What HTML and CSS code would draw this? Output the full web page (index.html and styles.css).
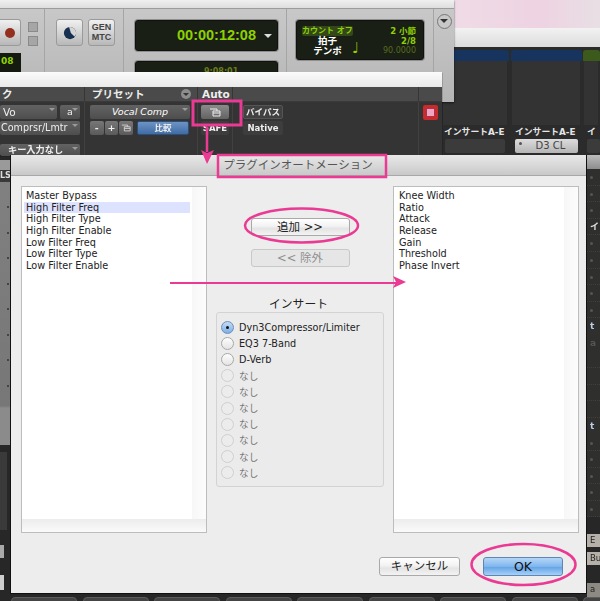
FILE: index.html
```html
<!DOCTYPE html>
<html>
<head>
  <meta charset="utf-8">
  <link rel="stylesheet" href="styles.css">
  <title>プラグインオートメーション</title>
</head>
<body>
  <div class="desktop">
    <div class="pink-strip"></div>
    <div class="white-band"></div>

    <div class="mixer">
      <div class="channel narrow">
        <div class="channel-bar"></div>
        <div class="channel-body"></div>
        <div class="channel-label">インサートA-E</div>
        <div class="slot"></div>
      </div>
      <div class="channel">
        <div class="channel-bar"></div>
        <div class="channel-body"></div>
        <div class="channel-label">インサートA-E</div>
        <div class="slot filled"><span class="slot-dot"></span>D3 CL</div>
      </div>
      <div class="channel last">
        <div class="channel-bar green"></div>
        <div class="channel-body"></div>
        <div class="channel-label">イ</div>
        <div class="slot"></div>
      </div>
    </div>

    <div class="side-right">
      <div class="side-top"></div>
      <div class="side-rows">
        <div class="row dot"></div><div class="row dot"></div><div class="row dot"></div>
        <div class="row label">イ</div>
        <div class="row dot"></div><div class="row dot"></div><div class="row dot"></div><div class="row dot"></div><div class="row dot"></div>
        <div class="row blue">t</div>
        <div class="row faint">a</div>
        <div class="row"></div><div class="row"></div><div class="row"></div><div class="row"></div>
        <div class="row blue">t</div>
        <div class="row dot"></div><div class="row dot"></div><div class="row dot"></div><div class="row dot"></div><div class="row dot"></div>
      </div>
      <div class="side-btn">E</div>
      <div class="side-btn">Bu</div>
      <div class="side-btn low">a</div>
    </div>
    <div class="side-left">
      <div class="side-head"></div>
      <div class="side-ls">LS</div>
      <div class="side-gray">
        <i></i><i></i><i></i><i></i><i></i><i></i><i></i><i></i>
      </div>
      <div class="side-dark"></div>
      <div class="side-key"></div>
      <div class="side-key second"></div>
    </div>
    <div class="bottom-row">
      <span></span><span></span><span></span><span></span><span></span><span></span><span></span><span></span><span></span>
    </div>

    <!-- transport -->
    <div class="transport">
      <div class="transport-top"></div>
      <div class="transport-main">
        <div class="section first">
          <div class="tbtn rec"><i></i></div>
          <div class="small-btns"><b></b><b></b></div>
          <div class="mini-display">08</div>
        </div>
        <div class="section second">
          <div class="tbtn"><svg width="14" height="14" viewBox="0 0 16 16"><circle cx="8" cy="8" r="7" fill="#17304f"/><path d="M8 1A7 7 0 0 1 15 8C15 10 14 11 13 12L9 8 7 1z" fill="#d5d5d5"/></svg></div>
          <div class="tbtn gen">GEN<br>MTC</div>
        </div>
        <div class="section third">
          <div class="display counter">00:00:12:08<span class="tri"></span></div>
          <div class="display sub">9:08:01</div>
        </div>
        <div class="section fourth">
          <div class="display info">
            <div class="info-left">
              <span class="count-off">カウント オフ</span>
              <span class="info-white">拍子</span>
              <span class="info-white">テンポ</span>
            </div>
            <em class="note">♩</em>
            <div class="info-right">
              <span>2 小節</span>
              <span>2/8</span>
              <span class="dim">90.0000</span>
            </div>
          </div>
        </div>
        <div class="section menu"><div class="menu-btn"><span class="tri dark"></span></div></div>
      </div>
    </div>

    <!-- plugin window -->
    <div class="plugin">
      <div class="plugin-title"></div>
      <div class="plugin-head">
        <div class="ph ph1">ク</div>
        <div class="ph ph2">プリセット<span class="ph-menu"><span class="tri small"></span></span></div>
        <div class="ph ph3">Auto</div>
        <div class="ph ph4"></div>
        <div class="ph ph5"></div>
      </div>
      <div class="plugin-body">
        <div class="plug-col col-a">
          <div class="pill sel vo">Vo</div>
          <div class="pill sel aa">a</div>
          <div class="pill sel wide">Comprsr/Lmtr</div>
          <div class="pill sel wide key">キー入力なし</div>
        </div>
        <div class="plug-col col-b">
          <div class="pill sel preset">Vocal Comp</div>
          <div class="mini">
            <span class="pill">-</span>
            <span class="pill">+</span>
            <span class="pill"><svg width="10" height="8" viewBox="0 0 12 9"><path d="M1 1h7v2M4 3h7v5H4zM4 5h7" fill="none" stroke="#ddd"/></svg></span>
          </div>
          <div class="pill compare">比較</div>
        </div>
        <div class="plug-col col-c">
          <div class="pill auto-btn"><svg width="12" height="9" viewBox="0 0 12 9"><path d="M1 1h7v2M4 3h7v5H4zM4 5h7" fill="none" stroke="#eee"/></svg></div>
          <div class="pill safe">SAFE</div>
        </div>
        <div class="plug-col col-d">
          <div class="pill bypass">バイパス</div>
          <div class="pill native">Native</div>
        </div>
        <div class="plug-col col-e"><div class="red-btn"><i></i></div></div>
      </div>
    </div>

    <!-- dialog -->
    <div class="dialog">
      <div class="dialog-title">プラグインオートメーション</div>
      <div class="dialog-body">
        <div class="list">
          <div class="list-items">
            <div class="item">Master Bypass</div>
            <div class="item selected">High Filter Freq</div>
            <div class="item">High Filter Type</div>
            <div class="item">High Filter Enable</div>
            <div class="item">Low Filter Freq</div>
            <div class="item">Low Filter Type</div>
            <div class="item">Low Filter Enable</div>
          </div>
          <div class="scroll-v"></div>
          <div class="scroll-h"></div>
        </div>

        <div class="middle">
          <button class="mac-btn add">追加 &gt;&gt;</button>
          <button class="mac-btn remove">&lt;&lt; 除外</button>
          <div class="group-title">インサート</div>
          <div class="group">
            <div class="radio-row"><span class="radio on"></span>Dyn3Compressor/Limiter</div>
            <div class="radio-row"><span class="radio"></span>EQ3 7-Band</div>
            <div class="radio-row"><span class="radio"></span>D-Verb</div>
            <div class="radio-row off"><span class="radio"></span>なし</div>
            <div class="radio-row off"><span class="radio"></span>なし</div>
            <div class="radio-row off"><span class="radio"></span>なし</div>
            <div class="radio-row off"><span class="radio"></span>なし</div>
            <div class="radio-row off"><span class="radio"></span>なし</div>
            <div class="radio-row off"><span class="radio"></span>なし</div>
            <div class="radio-row off"><span class="radio"></span>なし</div>
          </div>
        </div>

        <div class="list right">
          <div class="list-items">
            <div class="item">Knee Width</div>
            <div class="item">Ratio</div>
            <div class="item">Attack</div>
            <div class="item">Release</div>
            <div class="item">Gain</div>
            <div class="item">Threshold</div>
            <div class="item">Phase Invert</div>
          </div>
          <div class="scroll-v"></div>
          <div class="scroll-h"></div>
        </div>
      </div>
      <div class="dialog-foot">
        <button class="mac-btn cancel">キャンセル</button>
        <button class="mac-btn ok">OK</button>
      </div>
    </div>

    <!-- pink annotations drawn over the screenshot -->
    <svg class="marks" width="600" height="601" viewBox="0 0 600 601">
      <g fill="none" stroke="#ea3a93">
        <rect x="193" y="101" width="48" height="24" stroke-width="3"/>
        <rect x="218" y="155" width="168" height="22" stroke-width="2.5"/>
        <ellipse cx="301.500" cy="225.500" rx="56.500" ry="17" stroke-width="2.500"/>
        <ellipse cx="523.500" cy="564.500" rx="52" ry="20.500" stroke-width="2.500"/>
        <path d="M207 127V152" stroke-width="2.500"/>
        <path d="M170 283H397" stroke-width="2"/>
      </g>
      <path d="M201 150L207 153 214 150 207 164z" fill="#ea3a93"/>
      <path d="M393 276L406 282 393 288 396 282z" fill="#ea3a93"/>
    </svg>
  </div>
</body>
</html>
```

FILE: styles.css
```css
* {
  box-sizing: border-box;
}
html, body {
  margin: 0;
  padding: 0;
}
body {
  width: 600px;
  height: 601px;
  overflow: hidden;
  background-color: #262726;
  font-family: "DejaVu Sans", "Noto Sans CJK JP", sans-serif;
  font-size: 10px;
}
.desktop {
  position: relative;
  width: 600px;
  height: 601px;
  overflow: hidden;
  filter: blur(0.35px);
}

/* stuff behind the windows */
.pink-strip {
  position: absolute;
  left: 454px;
  top: 0;
  width: 146px;
  height: 28px;
  background: linear-gradient(90deg, #efdbe6, #eed3e2 60%, #e8dfe4);
}
.white-band {
  position: absolute;
  left: 454px;
  top: 28px;
  width: 146px;
  height: 19px;
  background: linear-gradient(#f2f2f2, #dcdcdc);
}
.mixer {
  position: absolute;
  left: 442px;
  top: 47px;
  width: 158px;
  height: 108px;
  display: flex;
  background-color: #2b2b2b;
}
.channel {
  width: 72px;
  padding: 3px 1px 0 0;
}
.channel.narrow {
  width: 69px;
  padding-right: 2px;
}
.channel.last {
  width: 17px;
  padding-right: 0;
}
.channel-bar {
  height: 11px;
  background-color: #17345f;
  border-radius: 3px 3px 0 0;
}
.channel-bar.green {
  background-color: #3c5a1c;
}
.channel-body {
  height: 64px;
  margin: 0 1px;
  background-color: #333;
  border-right: 1px solid #2a2a2a;
}
.channel-label {
  height: 14px;
  padding-left: 4px;
  color: #e6e6e6;
  font-size: 8.800px;
  font-weight: bold;
  line-height: 14px;
  white-space: nowrap;
}
.narrow .channel-label {
  padding-left: 2px;
}
.slot {
  height: 14px;
  margin: 0 4px;
  background-color: #3b3b3b;
  border-radius: 2px;
}
.narrow .slot {
  margin: 0 4px 0 3px;
}
.last .slot {
  margin-right: 0;
}
.slot.filled {
  position: relative;
  padding-left: 8px;
  background: linear-gradient(#dcdcdc, #b5b5b5);
  color: #444;
  font-size: 10px;
  line-height: 14px;
  text-align: center;
}
.slot-dot {
  position: absolute;
  left: 4px;
  top: 3px;
  width: 3px;
  height: 3px;
  background-color: #555;
  border-radius: 50%;
}
.side-right {
  position: absolute;
  left: 587px;
  top: 155px;
  width: 13px;
  height: 446px;
}
.side-top {
  height: 14px;
  background: linear-gradient(#bdbdbd, #8d8d8d);
}
.side-rows {
  margin-bottom: 17px;
  background-color: #2f302e;
}
.row {
  position: relative;
  height: 16.600px;
  padding-left: 3px;
  border-bottom: 1px dotted #3f3f3f;
  font-size: 9px;
  font-weight: bold;
  line-height: 16px;
}
.row.dot::before {
  content: "";
  position: absolute;
  left: 3px;
  top: 7px;
  width: 3px;
  height: 3px;
  background-color: #555;
  border-radius: 50%;
}
.row.label {
  color: #ddd;
}
.row.blue {
  color: #b9cfe6;
  border-bottom: none;
}
.row.faint {
  color: #555;
  border-bottom: none;
}
.side-btn {
  height: 13px;
  margin-bottom: 5px;
  padding-left: 3px;
  background-color: #b5b0a8;
  color: #222;
  font-size: 8.500px;
  line-height: 13px;
}
.side-btn.low {
  margin-top: 18px;
  height: 14px;
  background-color: #8d8a84;
}
.side-left {
  position: absolute;
  left: 0;
  top: 155px;
  width: 10px;
  height: 446px;
  display: flex;
  flex-direction: column;
}
.side-head {
  height: 10px;
  margin-top: 5px;
  background-color: #9a9a9a;
}
.side-ls {
  height: 12px;
  overflow: hidden;
  background-color: #3a3a3a;
  color: #ddd;
  font-size: 8px;
  font-weight: bold;
  line-height: 12px;
}
.side-gray {
  height: 263px;
  padding: 24px 1px 0 0;
  display: flex;
  flex-direction: column;
  align-items: flex-end;
  gap: 23.500px;
  background: linear-gradient(#808080, #777 85%, #8b8b8b 86%);
}
.side-gray i {
  display: block;
  width: 2px;
  height: 2px;
  background-color: #444;
}
.side-dark {
  height: 78px;
  width: 7px;
  margin-top: 7px;
  background-color: #3a3a3a;
}
.side-key {
  height: 13px;
  width: 4px;
  margin-top: 15px;
  background-color: #a9a9a9;
}
.side-key.second {
  height: 15px;
  margin-top: 17px;
  background-color: #cfcfcf;
}
.bottom-row {
  position: absolute;
  left: 11px;
  top: 597px;
  display: flex;
  gap: 5.500px;
}
.bottom-row span {
  width: 66px;
  height: 10px;
  background-color: #444;
  border: 1px solid #5c5c5c;
  border-radius: 4px;
}

/* transport window */
.transport {
  position: absolute;
  left: 0;
  top: 0;
  width: 454px;
  height: 102px;
  background-color: #bdbdbd;
  box-shadow: 0 1px 2px rgba(0, 0, 0, 0.6);
}
.transport-top {
  height: 9px;
  background: linear-gradient(#f0f0f0, #dedede);
  border-bottom: 1px solid #9c9c9c;
}
.transport-main {
  display: flex;
  height: 93px;
  background: linear-gradient(#c8c8c8, #b5b5b5);
}
.section {
  padding-top: 10px;
  display: flex;
  gap: 5px;
  border-right: 1px solid #a5a5a5;
}
.section.first {
  width: 45px;
  position: relative;
  gap: 7px;
}
.section.second {
  width: 79px;
  padding-left: 11px;
}
.section.third {
  width: 163px;
  padding: 11px 0 0 11px;
  flex-direction: column;
  gap: 10px;
}
.section.fourth {
  width: 146px;
  padding: 11px 0 0 9px;
  border-right: none;
}
.section.menu {
  flex: 1;
  justify-content: center;
  padding-top: 5px;
  border-left: 1px solid #a5a5a5;
  border-right: none;
}
.tbtn {
  width: 27px;
  height: 27px;
  flex: none;
  display: flex;
  align-items: center;
  justify-content: center;
  background: linear-gradient(#f0f0f0, #b8b8b8);
  border: 1px solid #9a9a9a;
  border-radius: 3px;
  color: #444;
  font-family: "Liberation Sans", sans-serif;
  font-size: 9px;
  font-weight: bold;
  line-height: 9.500px;
  text-align: center;
}
.tbtn.rec {
  width: 21px;
  border-left: none;
  border-radius: 0 3px 3px 0;
}
.tbtn.rec i {
  width: 10px;
  height: 10px;
  border-radius: 50%;
  background-color: #93301f;
}
.small-btns {
  display: flex;
  flex-direction: column;
  gap: 4px;
  padding-top: 3px;
}
.small-btns b {
  display: block;
  width: 10px;
  height: 10px;
  background-color: #a6a6a6;
  border: 1px solid #8a8a8a;
}
.mini-display {
  position: absolute;
  left: 0;
  top: 44px;
  width: 21px;
  height: 20px;
  padding: 3px 0 0 1px;
  background-color: #141a10;
  color: #8fd400;
  font-size: 9px;
  font-weight: bold;
}
.display {
  flex: none;
  background-color: #1a1f16;
  border: 1px solid #111;
  border-radius: 3px;
  box-shadow: 0 0 0 1px #8f8f8f;
}
.counter {
  position: relative;
  width: 143px;
  height: 31px;
  padding-left: 41px;
  color: #8ed100;
  font-family: "Liberation Sans", sans-serif;
  font-size: 14.500px;
  font-weight: bold;
  line-height: 29px;
}
.tri {
  position: absolute;
  right: 5px;
  top: 13px;
  border-left: 4px solid transparent;
  border-right: 4px solid transparent;
  border-top: 4px solid #ddd;
}
.sub {
  width: 143px;
  height: 24px;
  padding: 5px 0 0 68px;
  color: #6a7d1c;
  font-size: 8px;
  font-weight: bold;
}
.info {
  position: relative;
  width: 128px;
  height: 40px;
  display: flex;
  justify-content: space-between;
  padding: 5px 7px 0 5px;
  font-size: 9.500px;
  font-weight: bold;
  line-height: 10px;
}
.info-left, .info-right {
  display: flex;
  flex-direction: column;
}
.info-left {
  align-items: center;
}
.count-off {
  color: #8ed100;
  background-color: #33471a;
  border-radius: 2px;
  font-size: 8px;
}
.info-white {
  color: #fff;
}
.note {
  position: absolute;
  left: 55px;
  top: 20px;
  color: #9ad400;
  font-style: normal;
  font-size: 15px;
  line-height: 15px;
}
.info-right {
  align-items: flex-end;
  color: #8ed100;
  font-size: 8.500px;
}
.info-right .dim {
  color: #566b1d;
  font-size: 8px;
  font-weight: normal;
}
.menu-btn {
  position: relative;
  width: 15px;
  height: 15px;
  border: 1px solid #777;
  border-radius: 50%;
  background-color: #c8c8c8;
}
.tri.dark {
  right: 2.500px;
  top: 4px;
  border-top-color: #333;
}

/* plugin window */
.plugin {
  position: absolute;
  left: 0;
  top: 72px;
  width: 442px;
  height: 83px;
  background-color: #343434;
  box-shadow: 0 1px 1px #111;
}
.plugin-title {
  height: 15px;
  background: linear-gradient(#fbfbfb, #e9e9e9);
}
.plugin-head {
  display: flex;
  height: 15px;
  background-color: #4a4a4a;
  border-bottom: 1px solid #3a3a3a;
  color: #eee;
  font-size: 10.500px;
  font-weight: bold;
  line-height: 14px;
}
.ph {
  position: relative;
  border-right: 1px solid #363636;
}
.ph1 {
  width: 85px;
  padding-left: 2px;
}
.ph2 {
  width: 113px;
  padding-left: 7px;
}
.ph3 {
  width: 35px;
  padding-left: 4px;
}
.ph4 {
  width: 186px;
}
.ph5 {
  flex: 1;
  border-right: none;
}
.ph-menu {
  position: absolute;
  left: 96px;
  top: 2px;
  width: 10px;
  height: 10px;
  background-color: #8d8d8d;
  border-radius: 50%;
}
.tri.small {
  right: 2px;
  top: 4px;
  border-left-width: 3px;
  border-right-width: 3px;
  border-top: 3px solid #333;
}
.plugin-body {
  display: flex;
  height: 53px;
}
.plug-col {
  position: relative;
  display: flex;
  flex-wrap: wrap;
  align-content: flex-start;
  padding-top: 3px;
  gap: 2px 3px;
  border-right: 1px solid #414141;
}
.col-a {
  width: 85px;
}
.col-b {
  width: 113px;
  padding-left: 5px;
}
.col-c {
  width: 35px;
  padding-left: 3px;
}
.col-d {
  width: 186px;
  padding-left: 10px;
  flex-direction: column;
  align-content: flex-start;
}
.col-e {
  flex: 1;
  border-right: none;
  padding-left: 4px;
}
.pill {
  height: 14px;
  background: linear-gradient(#626262, #4e4e4e);
  border-radius: 2px;
  color: #eee;
  font-size: 9.500px;
  font-weight: bold;
  line-height: 14px;
  text-align: center;
  white-space: nowrap;
}
.sel {
  position: relative;
}
.sel::after {
  content: "";
  position: absolute;
  right: 2px;
  top: 3px;
  border-left: 3px solid transparent;
  border-right: 3px solid transparent;
  border-top: 3px solid #9a9a9a;
}
.vo {
  width: 57px;
  padding-left: 3px;
  text-align: left;
  font-weight: normal;
  font-size: 10.500px;
}
.aa {
  width: 20px;
  font-weight: normal;
}
.wide {
  width: 80px;
  padding-left: 1px;
  text-align: left;
  font-size: 9.600px;
  font-weight: normal;
}
.wide.key {
  margin-top: 7px;
  height: 12px;
  padding-left: 8px;
  font-size: 9.200px;
  font-weight: bold;
  line-height: 12px;
}
.preset {
  width: 100px;
  color: #fff;
  font-style: italic;
  font-weight: normal;
}
.mini {
  display: flex;
  gap: 1px;
  width: 43px;
}
.mini .pill {
  flex: 1;
  display: flex;
  align-items: center;
  justify-content: center;
  background: linear-gradient(#777, #5a5a5a);
}
.compare {
  width: 52px;
  margin-left: 1px;
  background: linear-gradient(#6d93c4, #3f6ca5);
  border: 1px solid #2d4d7b;
  font-size: 8.500px;
  line-height: 12px;
}
.auto-btn {
  width: 28px;
  display: flex;
  align-items: center;
  justify-content: center;
  background: linear-gradient(#8b8b8b, #636363);
}
.safe {
  width: 28px;
  background: #3d3d3d;
  font-size: 8.500px;
}
.bypass {
  width: 40px;
  background: #414141;
  border: 1px solid #555;
  font-size: 8.500px;
  line-height: 12px;
}
.native {
  width: 40px;
  background: #3d3d3d;
  font-size: 8.500px;
}
.red-btn {
  width: 15px;
  height: 15px;
  padding: 3px;
  background-color: #c92a2a;
  border-radius: 2px;
}
.red-btn i {
  display: block;
  width: 9px;
  height: 9px;
  background-color: #eda7c2;
  border: 1px solid #b03050;
}

/* dialog */
.dialog {
  position: absolute;
  left: 10px;
  top: 155px;
  width: 577px;
  height: 439px;
  background-color: #ededed;
  border: 1px solid #111;
  border-top: none;
}
.dialog-title {
  height: 21px;
  padding-right: 1px;
  background: linear-gradient(#e8e8e8, #c9c9c9);
  border-bottom: 1px solid #a8a8a8;
  color: #555;
  font-size: 11.500px;
  line-height: 21px;
  text-align: center;
}
.dialog-body {
  display: flex;
  padding: 10px 7px 0 10px;
  gap: 9px;
}
.list {
  position: relative;
  width: 186px;
  height: 347px;
  padding: 3px 16px 0 2px;
  background-color: #fff;
  border: 1px solid #bdbdbd;
}
.list.right {
  padding-left: 3px;
}
.item {
  height: 11.700px;
  padding-left: 2px;
  color: #222;
  font-size: 9.700px;
  line-height: 11.700px;
  white-space: nowrap;
}
.item.selected {
  background-color: #dde2ff;
}
.scroll-v {
  position: absolute;
  right: 0;
  top: 0;
  bottom: 0;
  width: 14px;
  background: linear-gradient(90deg, #f7f7f7, #fcfcfc);
}
.scroll-h {
  position: absolute;
  left: 0;
  right: 0;
  bottom: 0;
  height: 13px;
  background: linear-gradient(#ececec, #fafafa);
}
.middle {
  width: 168px;
  display: flex;
  flex-direction: column;
  align-items: center;
}
.mac-btn {
  display: block;
  padding: 0;
  background: linear-gradient(#fff, #f2f2f2 45%, #e4e4e4 60%, #f3f3f3);
  border: 1px solid #a9a9a9;
  border-radius: 3px;
  color: #222;
  font-family: "DejaVu Sans", "Noto Sans CJK JP", sans-serif;
  font-size: 11.500px;
}
.add {
  width: 99px;
  height: 18px;
  margin-top: 32px;
  line-height: 16px;
}
.remove {
  width: 99px;
  height: 18px;
  margin-top: 13px;
  background: #e6e6e6;
  border-color: #c8c8c8;
  color: #8f8f8f;
  line-height: 16px;
}
.group-title {
  height: 14px;
  margin-top: 30px;
  padding-right: 3px;
  color: #222;
  font-size: 11.800px;
  line-height: 14px;
}
.group {
  width: 168px;
  height: 175px;
  margin-top: 1px;
  padding-top: 6px;
  background-color: #ebebeb;
  border: 1px solid #d3d3d3;
  border-radius: 3px;
}
.radio-row {
  display: flex;
  align-items: center;
  height: 16.200px;
  padding-left: 4px;
  color: #222;
  font-size: 9.700px;
  white-space: nowrap;
}
.radio-row.off {
  color: #777;
}
.radio {
  width: 13px;
  height: 13px;
  margin-right: 5px;
  flex: none;
  background: linear-gradient(#fdfdfd, #e4e4e4);
  border: 1px solid #a8a8a8;
  border-radius: 50%;
}
.radio-row.off .radio {
  background: #ececec;
  border-color: #cfcfcf;
}
.radio.on {
  position: relative;
  background: linear-gradient(#c4dcf5, #7cb0e6);
  border-color: #6c8fb8;
}
.radio.on::after {
  content: "";
  position: absolute;
  left: 4px;
  top: 4px;
  width: 3px;
  height: 3px;
  background-color: #111;
  border-radius: 50%;
}
.dialog-foot {
  display: flex;
  justify-content: flex-end;
  gap: 23px;
  padding: 24px 23px 0 0;
}
.cancel {
  width: 81px;
  height: 19px;
  line-height: 17px;
}
.ok {
  width: 80px;
  height: 19px;
  background: linear-gradient(#b5d6f7, #80b6ee 50%, #62a2e6 52%, #a6d0f7);
  border-color: #5f86b0;
  color: #111;
  font-size: 12.500px;
  line-height: 17px;
}

.marks {
  position: absolute;
  left: 0;
  top: 0;
}
```
